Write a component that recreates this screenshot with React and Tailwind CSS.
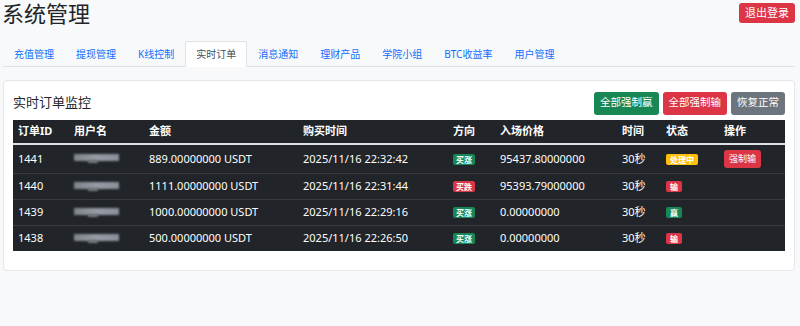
import React from 'react';

const tabs = ['充值管理', '提现管理', 'K线控制', '实时订单', '消息通知', '理财产品', '学院小组', 'BTC收益率', '用户管理'];

const orders = [
  { id: 1441, amount: '889.00000000 USDT', time: '2025/11/16 22:32:42', dir: 'up', price: '95437.80000000', status: 'pending' },
  { id: 1440, amount: '1111.00000000 USDT', time: '2025/11/16 22:31:44', dir: 'down', price: '95393.79000000', status: 'lose' },
  { id: 1439, amount: '1000.00000000 USDT', time: '2025/11/16 22:29:16', dir: 'up', price: '0.00000000', status: 'win' },
  { id: 1438, amount: '500.00000000 USDT', time: '2025/11/16 22:26:50', dir: 'up', price: '0.00000000', status: 'lose' },
];

const Badge = ({ kind }) => {
  if (kind === 'up') return <span className="inline-block px-[3px] py-[1px] rounded-[2px] bg-[#198754] text-white text-[8px] leading-[9px] font-bold">买涨</span>;
  if (kind === 'down') return <span className="inline-block px-[3px] py-[1px] rounded-[2px] bg-[#dc3545] text-white text-[8px] leading-[9px] font-bold">买跌</span>;
  if (kind === 'pending') return <span className="inline-block px-[4px] py-[1px] rounded-[2px] bg-[#ffc107] text-white text-[8px] leading-[9px] font-bold">处理中</span>;
  if (kind === 'win') return <span className="inline-block px-[4px] py-[1px] rounded-[2px] bg-[#198754] text-white text-[8px] leading-[9px] font-bold">赢</span>;
  return <span className="inline-block px-[4px] py-[1px] rounded-[2px] bg-[#dc3545] text-white text-[8px] leading-[9px] font-bold">输</span>;
};

const BlurName = () => (
  <div className="relative w-[45px] h-[7px] -mt-[2px]">
    <div className="absolute inset-0 bg-gradient-to-r from-[#8a8e96] via-[#a3a8b2] to-[#959aa4] blur-[1px] opacity-90" />
    <div className="absolute left-[14px] top-[6px] w-[10px] h-[3px] bg-[#767a82] blur-[1px]" />
  </div>
);

export default function App() {
  return (
    <div className="w-full h-[326px] overflow-hidden bg-[#f8f9fa] text-[#212529] pl-[3px] pr-[5px]" style={{ fontFamily: '"Segoe UI", "Noto Sans", "Noto Sans CJK SC", sans-serif' }}>
      {/* Header */}
      <div className="flex justify-between items-start h-[41px]">
        <h1 className="text-[22px] leading-[24px] -ml-[1px] font-normal text-[#212529]" style={{ fontFamily: '"Noto Sans CJK SC", sans-serif' }}>系统管理</h1>
        <button className="mt-[3px] h-[20px] px-[6px] rounded-[3px] bg-[#dc3545] text-white text-[11px] leading-[20px]">退出登录</button>
      </div>

      {/* Tabs */}
      <ul className="flex border-b border-[#dee2e6] h-[26px]">
        {tabs.map((t) => (
          t === '实时订单' ? (
            <li key={t} className="px-[10px] h-[26px] -mb-px bg-white border border-[#dee2e6] border-b-white rounded-t-[3px] text-[10px] leading-[24px] text-[#495057]">{t}</li>
          ) : (
            <li key={t} className="px-[10px] h-[25px] text-[10px] leading-[25px] text-[#0d6efd] border border-transparent">{t}</li>
          )
        ))}
      </ul>

      {/* Card */}
      <div className="mt-[13px] bg-white border border-[#e3e6ea] rounded-[4px] px-[9px] pt-[10px] pb-[19px]">
        <div className="flex justify-between items-center h-[24px] mb-[5px]">
          <h2 className="text-[13px] font-normal text-[#212529]">实时订单监控</h2>
          <div className="flex gap-[4px]">
            <button className="h-[23px] px-[6px] rounded-[3px] bg-[#198754] text-white text-[10.5px]">全部强制赢</button>
            <button className="h-[23px] px-[6px] rounded-[3px] bg-[#dc3545] text-white text-[10.5px]">全部强制输</button>
            <button className="h-[23px] px-[6px] rounded-[3px] bg-[#6c757d] text-white text-[10.5px]">恢复正常</button>
          </div>
        </div>

        <table className="w-full table-fixed border-collapse bg-[#212529] text-white text-[11px]">
          <colgroup>
            <col className="w-[56px]" />
            <col className="w-[75px]" />
            <col className="w-[154px]" />
            <col className="w-[150px]" />
            <col className="w-[47px]" />
            <col className="w-[122px]" />
            <col className="w-[44px]" />
            <col className="w-[58px]" />
            <col className="w-[66px]" />
          </colgroup>
          <thead>
            <tr className="h-[24px] border-b-2 border-[#dee2e6] text-left font-bold">
              {['订单ID', '用户名', '金额', '购买时间', '方向', '入场价格', '时间', '状态', '操作'].map((h) => (
                <th key={h} className="px-[5px] font-bold">{h}</th>
              ))}
            </tr>
          </thead>
          <tbody>
            {orders.map((o, i) => (
              <tr key={o.id} className={`${i === 0 ? 'h-[29px]' : 'h-[26px]'} ${i < orders.length - 1 ? 'border-b border-[#373b3e]' : ''}`}>
                <td className="px-[5px]">{o.id}</td>
                <td className="px-[5px]"><BlurName /></td>
                <td className="px-[5px]">{o.amount}</td>
                <td className="px-[5px]">{o.time}</td>
                <td className="px-[5px]"><Badge kind={o.dir} /></td>
                <td className="px-[5px]">{o.price}</td>
                <td className="px-[5px]">30秒</td>
                <td className="px-[5px]"><Badge kind={o.status} /></td>
                <td className="px-[5px]">
                  {o.status === 'pending' && (
                    <button className="h-[18px] px-[5px] rounded-[3px] bg-[#dc3545] text-white text-[9px] leading-[18px]">强制输</button>
                  )}
                </td>
              </tr>
            ))}
          </tbody>
        </table>
      </div>
    </div>
  );
}
